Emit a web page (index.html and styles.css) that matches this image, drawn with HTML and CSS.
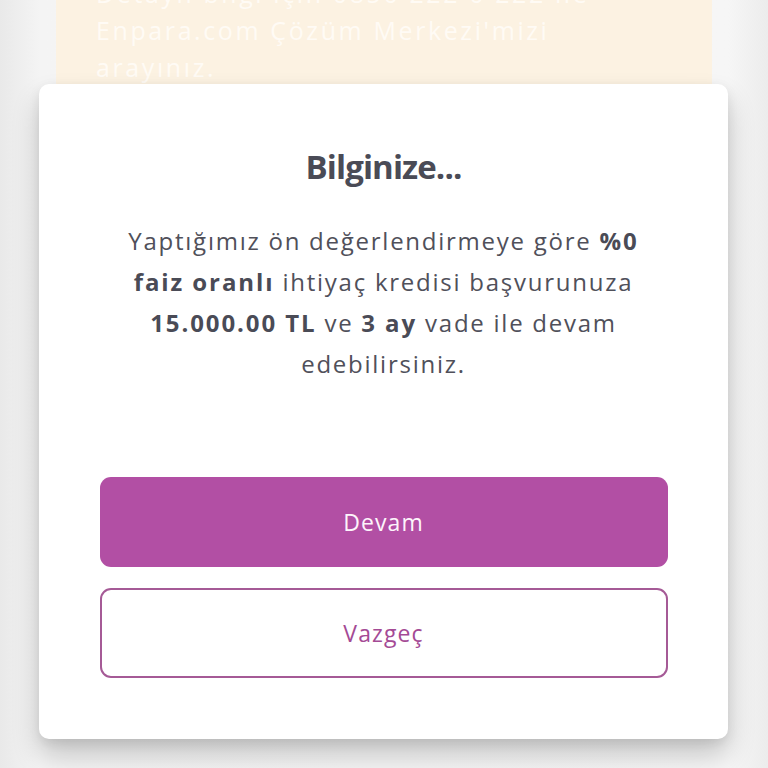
FILE: index.html
```html
<!DOCTYPE html>
<html lang="tr">
<head>
<meta charset="utf-8">
<link rel="stylesheet" href="styles.css">
</head>
<body>
<div class="page">
  <div class="notice">
    <p>Detaylı bilgi için 0850 222 0 222 ile Enpara.com Çözüm Merkezi'mizi arayınız.</p>
  </div>
  <div class="modal">
    <h1 class="title">Bilginize...</h1>
    <p class="message">Yaptığımız ön değerlendirmeye göre <b>%0 faiz oranlı</b> ihtiyaç kredisi başvurunuza <b>15.000.00 TL</b> ve <b>3 ay</b> vade ile devam edebilirsiniz.</p>
    <div class="actions">
      <button class="btn btn-primary">Devam</button>
      <button class="btn btn-outline">Vazgeç</button>
    </div>
  </div>
</div>
</body>
</html>
```
FILE: styles.css
```css
html, body {
  margin: 0;
  padding: 0;
  height: 768px;
  overflow: hidden;
}
body {
  background: linear-gradient(to right, #e9e9e9 0px, #f4f4f4 40px, #f6f6f6 728px, #ececec 768px);
  font-family: "Open Sans", "Liberation Sans", sans-serif;
}
.page {
  display: flex;
  flex-direction: column;
  align-items: center;
  height: 768px;
}
.notice {
  width: 656px;
  height: 84px;
  background: #fcf2e2;
  box-sizing: border-box;
  padding: 0 40px;
  overflow: hidden;
  display: flex;
  align-items: flex-end;
  flex-shrink: 0;
}
.notice p {
  margin: 0 0 -2px 0;
  color: #fffbf5;
  font-size: 25px;
  line-height: 37px;
  letter-spacing: 2.6px;
  max-width: 520px;
}
.modal {
  width: 689px;
  height: 655px;
  flex-shrink: 0;
  margin-left: -1px;
  background: #fff;
  border-radius: 10px;
  box-shadow: 0 16px 28px rgba(0,0,0,0.2), 0 4px 12px rgba(0,0,0,0.08);
  box-sizing: border-box;
  padding: 63px 60px 0;
  display: flex;
  flex-direction: column;
  align-items: center;
}
.title {
  margin: 0;
  font-size: 33px;
  line-height: 40px;
  font-weight: 700;
  letter-spacing: -0.9px;
  color: #4a4b56;
}
.message {
  margin: 33px 0 0;
  text-align: center;
  font-size: 24px;
  line-height: 41px;
  color: #50505a;
  letter-spacing: 1.75px;
  width: 530px;
}
.message b {
  font-weight: 700;
  color: #4a4b56;
  letter-spacing: 1.9px;
}
.actions {
  margin-top: 93px;
  width: 568px;
  display: flex;
  flex-direction: column;
  gap: 21px;
}
.btn {
  height: 90px;
  border-radius: 11px;
  font-family: "Open Sans", "Liberation Sans", sans-serif;
  font-size: 23px;
  letter-spacing: 1.1px;
  cursor: pointer;
  box-sizing: border-box;
}
.btn-primary {
  background: #b24fa4;
  color: #fdf4fb;
  border: none;
}
.btn-outline {
  background: #fff;
  color: #a44a95;
  border: 2px solid #a55a96;
}
```
